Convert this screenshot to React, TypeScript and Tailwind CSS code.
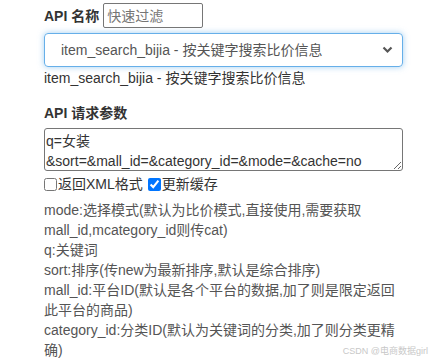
import React from "react";

const font = { fontFamily: '"Liberation Sans", Arial, "Noto Sans CJK SC", sans-serif' };

export default function App() {
  const desc = [
    "mode:选择模式(默认为比价模式,直接使用,需要获取",
    "mall_id,mcategory_id则传cat)",
    "q:关键词",
    "sort:排序(传new为最新排序,默认是综合排序)",
    "mall_id:平台ID(默认是各个平台的数据,加了则是限定返回",
    "此平台的商品)",
    "category_id:分类ID(默认为关键词的分类,加了则分类更精",
    "确)",
  ];
  return (
    <div
      className="relative w-[430px] h-[362px] overflow-hidden bg-white text-[14px] text-[#333]"
      style={font}
    >
      <div className="pl-[44px] pt-[3px] w-[403px]">
        <div className="flex items-center h-[25px]">
          <span className="font-bold leading-[20px] text-[#333]">API 名称</span>
          <input
            className="ml-[4px] w-[100px] h-[25px] border border-[#767676] rounded-[2px] px-[3px] text-[14px] text-[#333] placeholder:text-[#757575] outline-none"
            placeholder="快速过滤"
            style={font}
          />
        </div>
        <div className="mt-[5px] h-[34px] w-[359px] border border-[#66afe9] rounded-[4px] shadow-[0_0_6px_rgba(102,175,233,0.6)] flex items-center justify-between pl-[16px] pr-[8px] text-[#555]">
          <span className="leading-[20px]">item_search_bijia - 按关键字搜索比价信息</span>
          <svg width="11" height="8" viewBox="0 0 11 8" className="mr-[1px]">
            <path d="M1.5 1.5 L5.5 5.5 L9.5 1.5" fill="none" stroke="#555" strokeWidth="2.2" />
          </svg>
        </div>
        <div className="mt-[1px] leading-[20px] text-[#333]">item_search_bijia - 按关键字搜索比价信息</div>
        <div className="mt-[15px] leading-[20px] font-bold text-[#333]">API 请求参数</div>
        <textarea
          className="mt-[5px] block w-[359px] h-[43px] border border-[#767676] rounded-[3px] px-[1px] pt-[2px] leading-[20px] text-[14px] text-[#333] outline-none"
          style={font}
          defaultValue={"q=女装\n&sort=&mall_id=&category_id=&mode=&cache=no"}
        />
        <div className="mt-[3px] flex items-center h-[20px] leading-[20px] text-[#333]">
          <input type="checkbox" className="m-0 mr-[1px] w-[13px] h-[13px]" />
          <span>返回XML格式</span>
          <input type="checkbox" defaultChecked className="ml-[5px] mr-[1px] w-[13px] h-[13px]" />
          <span>更新缓存</span>
        </div>
        <div className="mt-[6px] text-[#555] leading-[20px]">
          {desc.map((d, i) => (
            <div key={i} className="whitespace-nowrap">{d}</div>
          ))}
        </div>
      </div>
      <div className="absolute right-[2px] top-[345px] whitespace-nowrap text-[9px] text-[#c8c8c8]">
        CSDN @电商数据girl
      </div>
    </div>
  );
}
